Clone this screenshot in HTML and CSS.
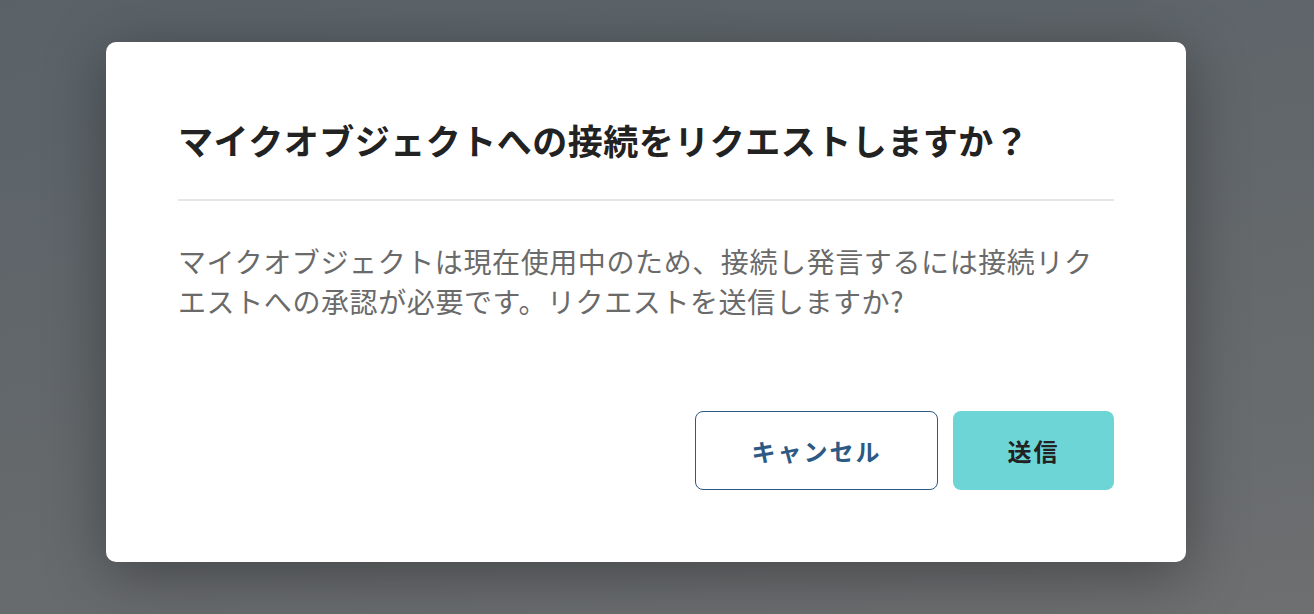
FILE: index.html
```html
<!DOCTYPE html>
<html lang="ja">
<head>
<meta charset="utf-8">
<title>接続リクエスト</title>
<link rel="stylesheet" href="styles.css">
</head>
<body>
<div class="dialog" role="dialog">
  <h2 class="dialog-title">マイクオブジェクトへの接続をリクエストしますか？</h2>
  <p class="dialog-body">マイクオブジェクトは現在使用中のため、接続し発言するには接続リクエストへの承認が必要です。リクエストを送信しますか?</p>
  <div class="dialog-actions">
    <button class="btn btn-cancel">キャンセル</button>
    <button class="btn btn-send">送信</button>
  </div>
</div>
</body>
</html>
```

FILE: styles.css
```css
html, body {
  margin: 0;
  padding: 0;
}
body {
  width: 1314px;
  height: 614px;
  box-sizing: border-box;
  padding: 42px 0 0 106px;
  background: linear-gradient(170deg, #5a6268 0%, #62676b 45%, #6d6f70 100%);
  font-family: "Noto Sans CJK JP", "Noto Sans", sans-serif;
  overflow: hidden;
}
.dialog {
  width: 1080px;
  height: 520px;
  box-sizing: border-box;
  padding: 72px;
  background: #ffffff;
  border-radius: 10px;
  box-shadow: 0 12px 60px rgba(0, 0, 0, 0.35);
  display: flex;
  flex-direction: column;
}
.dialog-title {
  margin: 0;
  font-size: 35px;
  font-weight: 700;
  line-height: 52px;
  letter-spacing: 0.5px;
  color: #222222;
  padding-bottom: 33px;
  border-bottom: 2px solid #e6e6ea;
}
.dialog-body {
  margin: 40px 0 0;
  font-size: 28px;
  line-height: 40px;
  letter-spacing: 0.6px;
  color: #6a6a6a;
}
.dialog-actions {
  margin-top: auto;
  display: flex;
  justify-content: flex-end;
  gap: 15px;
}
.btn {
  height: 79px;
  box-sizing: border-box;
  border-radius: 8px;
  font-family: "Noto Sans CJK JP", "Noto Sans", sans-serif;
  font-size: 24px;
  font-weight: 700;
  letter-spacing: 2px;
  cursor: pointer;
}
.btn-cancel {
  width: 243px;
  background: #ffffff;
  border: 1px solid #2d5a85;
  color: #2d5a85;
}
.btn-send {
  width: 161px;
  background: #6dd5d6;
  border: none;
  color: #222222;
}
```
